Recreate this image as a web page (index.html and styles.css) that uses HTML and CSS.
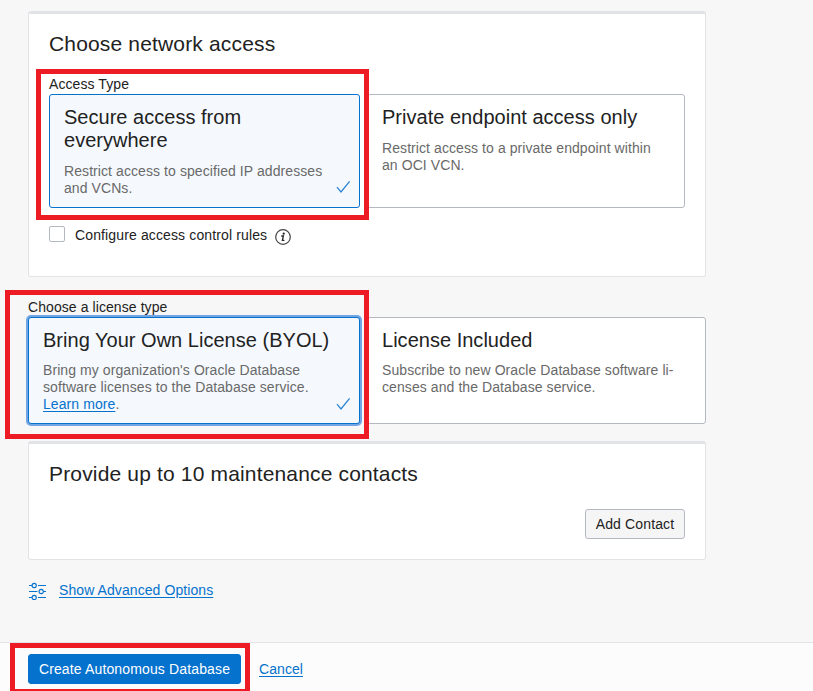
FILE: index.html
```html
<!DOCTYPE html>
<html lang="en">
<head>
<meta charset="utf-8">
<title>Create Autonomous Database</title>
<link rel="stylesheet" href="styles.css">
</head>
<body>
<main class="content">
  <section class="panel panel-network">
    <h2 class="heading heading-network">Choose network access</h2>
    <div class="label">Access Type</div>
    <div class="options options-network">
      <div class="option selected">
        <h3>Secure access from<br>everywhere</h3>
        <p>Restrict access to specified IP addresses<br>and VCNs.</p>
        <svg class="check" width="15" height="14" viewBox="0 0 15 14"><path d="M1 7.2 5 12 13.6 1.3"/></svg>
      </div>
      <div class="option">
        <h3>Private endpoint access only</h3>
        <p>Restrict access to a private endpoint within<br>an OCI VCN.</p>
      </div>
    </div>
    <div class="rule">
      <span class="checkbox"></span>
      <span class="rule-label">Configure access control rules</span>
      <svg class="info" width="16" height="16" viewBox="0 0 16 16"><circle cx="8" cy="8" r="7.3"/><circle class="dot" cx="8.7" cy="4.7" r="1.1"/><path class="stem" d="M6.3 7H8.4L7.4 11.3H9.4"/></svg>
    </div>
  </section>

  <section class="license">
    <div class="label">Choose a license type</div>
    <div class="options options-license">
      <div class="option selected focused">
        <h3>Bring Your Own License (BYOL)</h3>
        <p>Bring my organization's Oracle Database<br>software licenses to the Database service.<br><a href="#">Learn more</a>.</p>
        <svg class="check" width="15" height="14" viewBox="0 0 15 14"><path d="M1 7.2 5 12 13.6 1.3"/></svg>
      </div>
      <div class="option">
        <h3>License Included</h3>
        <p>Subscribe to new Oracle Database software li-<br>censes and the Database service.</p>
      </div>
    </div>
  </section>

  <section class="panel panel-contacts">
    <h2 class="heading">Provide up to 10 maintenance contacts</h2>
    <button class="button">Add Contact</button>
  </section>

  <div class="advanced">
    <svg width="18" height="18" viewBox="0 0 18 18"><path d="M0 3.5H3M9 3.5H17M0 9.5H8.5M14.5 9.5H17M0 15.5H3M9 15.5H17"/><circle cx="5.2" cy="3.5" r="2.1"/><circle cx="12.2" cy="9.5" r="2.1"/><circle cx="5.2" cy="15.5" r="2.1"/></svg>
    <a href="#">Show Advanced Options</a>
  </div>
</main>
<footer class="footer">
  <button class="button primary">Create Autonomous Database</button>
  <a href="#">Cancel</a>
</footer>
<div class="marker marker-access"></div>
<div class="marker marker-license"></div>
<div class="marker marker-create"></div>
</body>
</html>
```

FILE: styles.css
```css
* { box-sizing: border-box; }
body {
  position: relative;
  margin: 0;
  height: 691px;
  overflow: hidden;
  display: flex;
  flex-direction: column;
  background: #f7f7f7;
  color: #222;
  font: 14px/17px "Liberation Sans", Arial, sans-serif;
  letter-spacing: 0.08px;
}
h2, h3, p { margin: 0; font-weight: normal; white-space: nowrap; }
a { color: #0572ce; text-decoration: underline; text-underline-offset: 2px; text-decoration-thickness: 1px; }
.content { width: 706px; height: 642px; padding: 11px 0 0 28px; flex: none; }
.panel {
  background: #fff;
  border: 1px solid #e1e3e6;
  border-top-width: 3px;
  border-radius: 3px;
  padding: 0 20px;
}
.panel-network { height: 266px; }
.heading { font-size: 21px; line-height: 24px; padding-top: 18px; letter-spacing: 0.16px; }
.label { height: 17px; white-space: nowrap; }
.heading-network { height: 62px; }
.options { display: grid; gap: 7px; }
.options-network { grid-template-columns: 311px 318px; height: 114px; margin-top: 1px; }
.options-license { grid-template-columns: 332px 339px; height: 107px; margin-top: 1px; }
.option {
  position: relative;
  background: #fff;
  border: 1px solid #b3b8c1;
  border-radius: 3px;
  padding: 11px 14px 0;
}
.option h3 { font-size: 20px; line-height: 23px; letter-spacing: 0.02px; }
.option p { margin-top: 11px; color: #696969; }
.options-license p { margin-top: 10px; }
.selected { background: #f5f9fe; border-color: #0572ce; }
.focused { box-shadow: 0 0 0 2px #72a5e3; }
.check { position: absolute; right: 8px; bottom: 13px; fill: none; stroke: #2b84d4; stroke-width: 1.3; }
.focused .check { bottom: 12px; }
.rule { display: flex; height: 20px; margin-top: 18px; white-space: nowrap; }
.checkbox { width: 16px; height: 16px; margin-right: 10px; border: 1px solid #b3b8c1; border-radius: 2px; background: #fff; }
.rule-label { padding-top: 1px; letter-spacing: 0.13px; }
.info { margin: 3px 0 0 8px; fill: none; stroke: #444; stroke-width: 1.2; }
.info .dot { fill: #222; stroke: none; }
.info .stem { stroke: #222; stroke-width: 1.3; }
.license { padding-top: 22px; height: 164px; }
.panel-contacts { display: flex; flex-direction: column; height: 119px; }
.button {
  height: 30px;
  padding: 0;
  border: 1px solid #b3b8c1;
  border-radius: 3px;
  background: #f5f5f5;
  color: #222;
  font: inherit;
  letter-spacing: 0.14px;
}
.panel-contacts .button { width: 100px; margin: 23px 0 0; align-self: flex-end; }
.advanced { display: flex; gap: 12px; padding: 22px 0 0 1px; white-space: nowrap; }
.advanced svg { fill: none; stroke: #0572ce; stroke-width: 1.1; }
.footer { display: flex; flex: 1; gap: 18px; border-top: 1px solid #e1e3e6; background: #fcfcfc; padding: 11px 28px 0; }
.footer .primary { width: 213px; background: #0572ce; border-color: #0572ce; color: #fff; }
.footer a { padding-top: 7px; }
.marker { position: absolute; border: 5px solid #ed1c24; }
.marker-access { left: 36px; top: 69px; width: 333px; height: 151px; }
.marker-license { left: 5px; top: 290px; width: 364px; height: 149px; }
.marker-create { left: 10px; top: 643px; width: 240px; height: 51px; }
```
